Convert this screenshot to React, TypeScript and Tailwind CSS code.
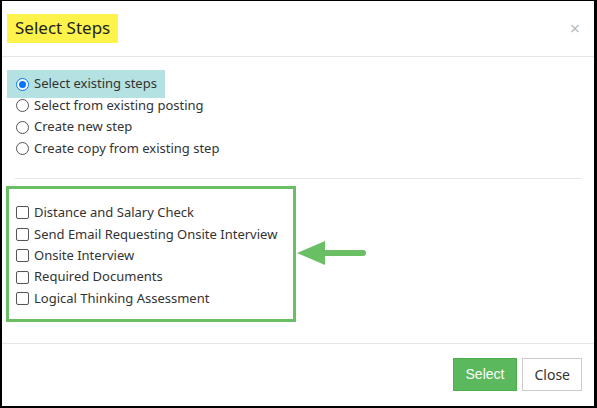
import React from "react";

const radios = [
  "Select existing steps",
  "Select from existing posting",
  "Create new step",
  "Create copy from existing step",
];

const steps = [
  "Distance and Salary Check",
  "Send Email Requesting Onsite Interview",
  "Onsite Interview",
  "Required Documents",
  "Logical Thinking Assessment",
];

function Radio({ checked }: { checked?: boolean }) {
  return (
    <span
      className={`w-[13px] h-[13px] rounded-full border flex items-center justify-center shrink-0 bg-white ${
        checked ? "border-[#0075ff]" : "border-[#555]"
      }`}
    >
      {checked && <span className="w-[7px] h-[7px] rounded-full bg-[#0075ff]" />}
    </span>
  );
}

function Box() {
  return <span className="w-[13px] h-[13px] rounded-[2px] border border-[#555] bg-white shrink-0" />;
}

export default function App() {
  return (
    <div
      className="w-[597px] h-[408px] bg-white border-l-2 border-t border-r-[3px] border-b-2 border-black flex flex-col text-[#333]"
      style={{ fontFamily: '"Noto Sans", "Open Sans", sans-serif' }}
    >
      {/* Header */}
      <div className="h-[56px] flex items-center justify-between pl-[5px] pr-[14px] border-b border-[#e5e5e5]">
        <div className="bg-[#fdf34a] h-[29px] px-[8px] flex items-center text-[17px] text-[#222] -mt-[1px]">
          Select Steps
        </div>
        <span className="text-[18px] text-[#bbb] leading-none -mt-[2px]">×</span>
      </div>

      {/* Body */}
      <div className="flex-1 px-[13px] pt-[13px]">
        <div className="flex flex-col -ml-[8px]">
          {radios.map((r, i) => (
            <div
              key={r}
              className={`flex items-center gap-[5px] pl-[9px] pr-[8px] text-[13px] text-[#333] self-start ${
                i === 0 ? "bg-[#b4e1e1] h-[28px] -mb-[3.25px]" : "h-[21.5px]"
              }`}
            >
              <Radio checked={i === 0} />
              <span>{r}</span>
            </div>
          ))}
        </div>

        <div className="mt-[19px] border-t border-[#e5e5e5]" />

        <div className="flex items-center mt-[7px] -ml-[9px]">
          <div className="w-[290px] h-[136px] border-[3px] border-[#6abf64] flex flex-col justify-center pl-[7px] pt-[3px]">
            {steps.map((s) => (
              <div key={s} className="flex items-center gap-[5px] h-[21.4px] text-[13px] text-[#333]">
                <Box />
                <span>{s}</span>
              </div>
            ))}
          </div>
          <svg width="72" height="26" viewBox="0 0 72 26" className="-ml-[1px] -mt-[2px]">
            <polygon points="2,13 30,1 30,25" fill="#6abf64" />
            <line x1="26" y1="13" x2="68" y2="13" stroke="#6abf64" strokeWidth="6" strokeLinecap="round" />
          </svg>
        </div>
      </div>

      {/* Footer */}
      <div className="h-[63px] border-t border-[#e5e5e5] flex items-center justify-end gap-[5px] pr-[12px] pb-[1px]">
        <button
          className="h-[33px] px-[12px] bg-[#5cb85c] text-white text-[14px] border border-[#4cae4c]"
          style={{ fontFamily: '"Liberation Sans", Arial, sans-serif' }}
        >
          Select
        </button>
        <button className="h-[33px] px-[11px] bg-white text-[#333] text-[14px] border border-[#ccc]">
          Close
        </button>
      </div>
    </div>
  );
}
